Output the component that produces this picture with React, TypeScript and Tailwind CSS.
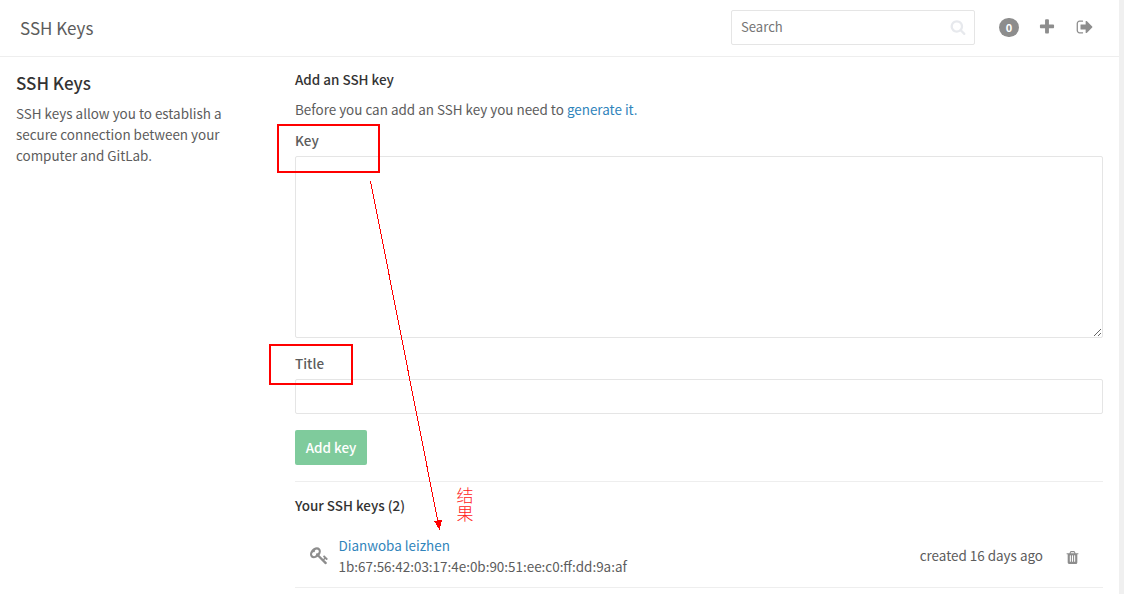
import React from "react";

type IconProps = { d: string; className: string };

const icons = {
  search:
    "M1216 832q0-185-131.5-316.5t-316.5-131.5-316.5 131.5-131.5 316.5 131.5 316.5 316.5 131.5 316.5-131.5 131.5-316.5zm512 832q0 52-38 90t-90 38q-54 0-90-38l-343-342q-179 124-399 124-143 0-273.5-55.5t-225-150-150-225-55.5-273.5 55.5-273.5 150-225 225-150 273.5-55.5 273.5 55.5 225 150 150 225 55.5 273.5q0 220-124 399l343 343q37 37 37 90z",
  plus: "M1600 736v192q0 40-28 68t-68 28h-416v416q0 40-28 68t-68 28h-192q-40 0-68-28t-28-68v-416h-416q-40 0-68-28t-28-68v-192q0-40 28-68t68-28h416v-416q0-40 28-68t68-28h192q40 0 68 28t28 68v416h416q40 0 68 28t28 68z",
  signOut:
    "M704 1440q0 4 1 20t.5 26.5-3 23.5-10 19.5-20.5 6.5h-320q-119 0-203.5-84.5t-84.5-203.5v-704q0-119 84.5-203.5t203.5-84.5h320q13 0 22.5 9.5t9.5 22.5q0 4 1 20t.5 26.5-3 23.5-10 19.5-20.5 6.5h-320q-66 0-113 47t-47 113v704q0 66 47 113t113 47h312l11.5 1 11.5 3 8 5.5 7 9 2 13.5zm928-544q0 26-19 45l-544 544q-19 19-45 19t-45-19-19-45v-288h-448q-26 0-45-19t-19-45v-384q0-26 19-45t45-19h448v-288q0-26 19-45t45-19 45 19l544 544q19 19 19 45z",
  key: "M832 512q0-80-56-136t-136-56-136 56-56 136q0 42 19 83-41-19-83-19-80 0-136 56t-56 136 56 136 136 56 136-56 56-136q0-42-19-83 41 19 83 19 80 0 136-56t56-136zm851 704q0 17-49 66t-66 49q-9 0-28.5-16t-36.5-33-38.5-40-24.5-26l-96 96 220 220q28 28 28 68 0 42-39 81t-81 39q-40 0-68-28l-671-671q-176 131-365 131-163 0-265.5-102.5t-102.5-265.5q0-160 95-313t248-248 313-95q163 0 265.5 102.5t102.5 265.5q0 189-131 365l355 355 96-96q-3-3-26-24.5t-40-38.5-33-36.5-16-28.5q0-17 49-66t66-49q13 0 23 10 6 6 46 44.5t82 79.5 86.5 86 73 78 28.5 41z",
  trash:
    "M704 1376v-704q0-14-9-23t-23-9h-64q-14 0-23 9t-9 23v704q0 14 9 23t23 9h64q14 0 23-9t9-23zm256 0v-704q0-14-9-23t-23-9h-64q-14 0-23 9t-9 23v704q0 14 9 23t23 9h64q14 0 23-9t9-23zm256 0v-704q0-14-9-23t-23-9h-64q-14 0-23 9t-9 23v704q0 14 9 23t23 9h64q14 0 23-9t9-23zm-544-992h448l-48-117q-7-9-17-11h-317q-10 2-17 11zm928 32v64q0 14-9 23t-23 9h-96v948q0 83-47 143.5t-113 60.5h-832q-66 0-113-58.5t-47-141.5v-952h-96q-14 0-23-9t-9-23v-64q0-14 9-23t23-9h309l70-167q15-37 54-63t79-26h320q40 0 79 26t54 63l70 167h309q14 0 23 9t9 23z",
};

function Icon({ d, className }: IconProps) {
  return (
    <svg viewBox="0 0 1792 1792" fill="currentColor" className={className} aria-hidden="true">
      <path d={d} />
    </svg>
  );
}

function Header() {
  return (
    <header className="flex h-[57px] items-center border-b border-[#eeeeee] pr-[25px] pb-[2px] pl-5">
      <h1 className="flex-1 pt-px text-[17px] leading-6 text-[#5c5c5c]">SSH Keys</h1>
      <div className="flex h-[35px] w-[244px] items-center justify-between rounded-[2px] border border-[#e5e5e5] pr-2 pl-[9px]">
        <span className="pb-px text-[13.1px] leading-5 text-[#757575]">Search</span>
        <Icon d={icons.search} className="size-4 text-[#e7e9ed]" />
      </div>
      <span className="ml-6 flex h-[19px] w-5 items-center justify-center rounded-full bg-[#8d8d8d] text-[11px] font-bold leading-none text-white">
        0
      </span>
      <Icon d={icons.plus} className="ml-[19px] size-[18px] text-[#8d8d8d]" />
      <Icon d={icons.signOut} className="ml-5 size-[18px] text-[#8d8d8d]" />
    </header>
  );
}

function KeyForm() {
  return (
    <form className="flex flex-col items-start">
      <h2 className="font-medium leading-[21px] text-[#333333]">Add an SSH key</h2>
      <p className="mt-[9px] leading-[21px]">
        Before you can add an SSH key you need to <a className="text-[#3084bb]">generate it.</a>
      </p>
      <label htmlFor="key" className="mt-[10px] font-medium leading-[21px]">Key</label>
      <textarea id="key" className="mt-[5px] block h-[182px] w-full resize rounded-[2px] border border-[#e5e5e5] outline-none" />
      <label htmlFor="title" className="mt-[15px] font-medium leading-[21px]">Title</label>
      <input id="title" className="mt-[5px] block h-[35px] w-full rounded-[2px] border border-[#e5e5e5] outline-none" />
      <button type="button" className="mt-4 h-[35px] w-[72px] rounded-[2px] bg-[#7fcb9c] font-medium text-white">
        Add key
      </button>
    </form>
  );
}

function KeyList() {
  return (
    <section className="mt-4 border-t border-[#eeeeee] pt-[13px]">
      <h2 className="font-medium leading-[21px] text-[#333333]">Your SSH keys (2)</h2>
      <div className="mt-[10px] flex h-[62px] items-center border-b border-[#eeeeee] pr-[23px] pb-px pl-[14.5px]">
        <Icon d={icons.key} className="mb-px size-[19px] text-[#8d8d8d]" />
        <div className="ml-[10px] flex-1 leading-[21px]">
          <a className="block text-[#3084bb]">Dianwoba leizhen</a>
          <span className="block">1b:67:56:42:03:17:4e:0b:90:51:ee:c0:ff:dd:9a:af</span>
        </div>
        <span className="pb-px leading-[21px]">created 16 days ago</span>
        <Icon d={icons.trash} className="mt-[2px] ml-[22px] size-[15px] text-[#8d8d8d]" />
      </div>
    </section>
  );
}

function Annotations() {
  return (
    <div className="pointer-events-none absolute inset-0">
      <div className="absolute top-[124px] left-[277px] h-[49px] w-[103px] border-2 border-[#ff0000]" />
      <div className="absolute top-[344px] left-[269px] h-[41px] w-[84px] border-2 border-[#ff0000]" />
      <svg width="1124" height="594" className="absolute inset-0" shapeRendering="crispEdges">
        <path d="M370.5 181L438 522" stroke="#ff0000" fill="none" />
        <path d="M434 521L442 520L439.5 530Z" fill="#ff0000" />
      </svg>
      <div className="absolute top-[486px] left-[456.5px] w-[17px] text-[17px] font-light leading-[18px] text-[#ff2020]">
        结果
      </div>
    </div>
  );
}

export default function App() {
  return (
    <div className="relative flex h-[594px] w-[1124px] overflow-hidden bg-white font-['Noto_Sans_CJK_SC',sans-serif] text-[13.44px] text-[#5c5c5c]">
      <div className="flex-1">
        <Header />
        <main className="flex pr-4 pl-4">
          <aside className="w-[279px] pt-[14px]">
            <h2 className="text-[17px] font-medium leading-6 text-[#333333]">SSH Keys</h2>
            <p className="mt-2 w-[220px] leading-[21px]">
              SSH keys allow you to establish a secure connection between your computer and GitLab.
            </p>
          </aside>
          <div className="flex-1 pt-3">
            <KeyForm />
            <KeyList />
          </div>
        </main>
      </div>
      <div className="w-[5px] bg-[#f0f0f0]" />
      <Annotations />
    </div>
  );
}
